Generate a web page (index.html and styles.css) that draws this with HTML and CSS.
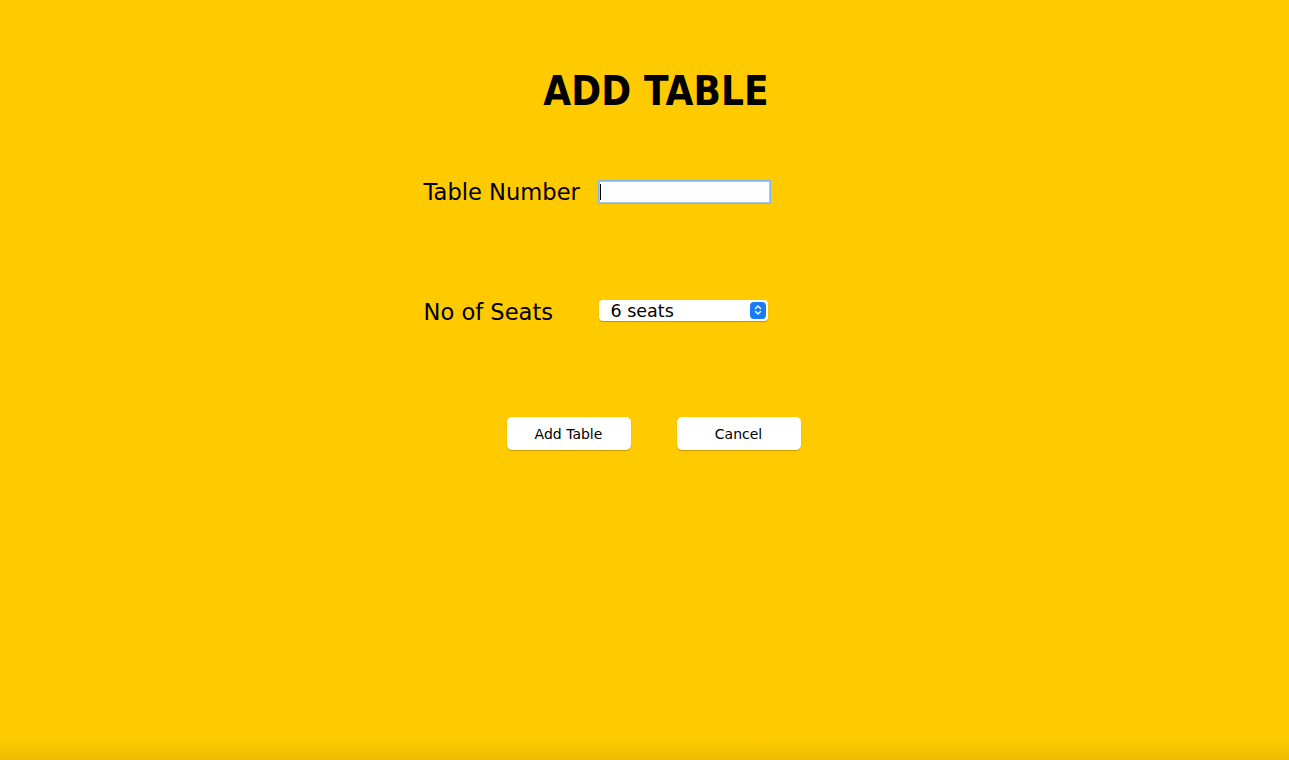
FILE: index.html
```html
<!DOCTYPE html>
<html>
<head>
<meta charset="utf-8">
<link rel="stylesheet" href="styles.css">
</head>
<body>
<div class="page">
  <main class="panel">
    <h1 class="title">ADD TABLE</h1>
    <form class="form">
      <div class="row">
        <label class="label" for="tn">Table Number</label>
        <span class="input-wrap"><input class="input" id="tn" type="text"><span class="caret"></span></span>
      </div>
      <div class="row">
        <label class="label" for="seats">No of Seats</label>
        <div class="select">
          <span class="select-text">6 seats</span>
          <span class="stepper">
            <svg width="10" height="12" viewBox="0 0 10 12"><path d="M2.5 4.5 L5 2 L7.5 4.5 M2.5 7.5 L5 10 L7.5 7.5" fill="none" stroke="#fff" stroke-width="1.4" stroke-linecap="round" stroke-linejoin="round"/></svg>
          </span>
        </div>
      </div>
      <div class="actions">
        <button type="button" class="btn">Add Table</button>
        <button type="button" class="btn">Cancel</button>
      </div>
    </form>
  </main>
  <div class="shade"></div>
</div>
</body>
</html>
```
FILE: styles.css
```css
html, body {
  margin: 0;
  padding: 0;
  height: 100%;
}
body {
  background: #ffcb00;
  font-family: "DejaVu Sans", Verdana, sans-serif;
  color: #000;
  overflow: hidden;
}
.page {
  position: relative;
  height: 760px;
  display: flex;
  justify-content: center;
  padding-left: 20px;
  box-sizing: border-box;
}
.panel {
  width: 462px;
  display: flex;
  flex-direction: column;
}
.title {
  margin: 68px 0 0;
  padding-left: 3px;
  text-align: center;
  font-family: "DejaVu Sans Condensed", "DejaVu Sans", sans-serif;
  font-stretch: condensed;
  font-size: 40px;
  font-weight: bold;
  line-height: 46px;
  letter-spacing: 0.1px;
}
.form {
  display: flex;
  flex-direction: column;
  margin-top: 60px;
}
.row {
  display: flex;
  align-items: center;
  height: 32px;
  margin-bottom: 88px;
}
.label {
  width: 174px;
  flex: none;
  font-size: 22.6px;
  padding-top: 4px;
  white-space: nowrap;
}
.input-wrap {
  position: relative;
  display: block;
  flex: none;
  margin-top: 4px;
}
.input {
  display: block;
  width: 173px;
  height: 24px;
  box-sizing: border-box;
  border: 1px solid #7fb2e6;
  box-shadow: 0 0 0 1px #a9cdf0 inset;
  background: #fff;
  outline: none;
  padding: 0;
}
.caret {
  position: absolute;
  left: 2px;
  top: 4px;
  width: 1px;
  height: 16px;
  background: #000;
}
.select {
  flex: none;
  margin-left: 1px;
  width: 169px;
  height: 21px;
  box-sizing: border-box;
  background: #fff;
  border-radius: 4px;
  box-shadow: 0 1px 1px rgba(150, 110, 0, 0.6);
  display: flex;
  align-items: center;
  justify-content: space-between;
  padding: 0 2px 0 12px;
}
.select-text {
  font-size: 17.5px;
  line-height: 20px;
  padding-top: 2px;
}
.stepper {
  width: 16px;
  height: 17px;
  border-radius: 4px;
  background: #1a7cf4;
  display: flex;
  align-items: center;
  justify-content: center;
}
.actions {
  display: flex;
  justify-content: center;
  gap: 46px;
  margin-top: 3px;
  padding-right: 2px;
}
.btn {
  width: 124px;
  height: 33px;
  background: #fff;
  border: none;
  border-radius: 5px;
  box-shadow: 0 1px 1px rgba(160, 110, 0, 0.55);
  font-family: "DejaVu Sans", Verdana, sans-serif;
  font-size: 14px;
  color: #000;
  padding: 0;
}
.shade {
  position: absolute;
  left: 0;
  right: 0;
  bottom: 0;
  height: 22px;
  background: linear-gradient(to bottom, rgba(230, 180, 0, 0), rgba(230, 180, 0, 0.7));
}
```
